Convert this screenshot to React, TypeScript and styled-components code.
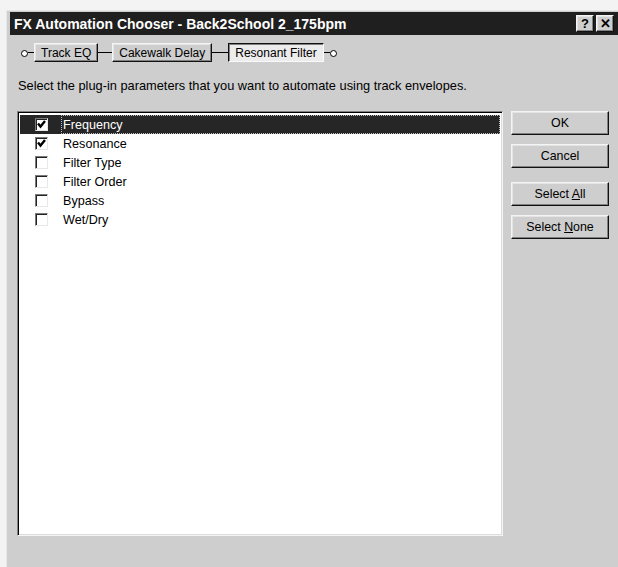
import styled, { createGlobalStyle } from "styled-components";

const GlobalStyle = createGlobalStyle`
  html, body {
    margin: 0;
    padding: 0;
    background: #f3f3f3;
    overflow: hidden;
  }
  body {
    font-family: "Liberation Sans", Arial, sans-serif;
    font-size: 12px;
    color: #000;
  }
`;

const Window = styled.div`
  margin: 10px 0 0 6px;
  width: 612px;
  height: 570px;
  box-sizing: border-box;
  background: #cecece;
  border-top: 1px solid #e8e8e8;
  border-left: 1px solid #e8e8e8;
  padding: 1px 0 0 3px;
`;

const TitleBar = styled.div`
  height: 23px;
  background: #1f1f1f;
  color: #fff;
  display: flex;
  align-items: center;
  justify-content: space-between;
  padding: 0 4px;
  font-weight: bold;
  font-size: 14px;
`;

const TitleButtons = styled.div`
  display: flex;
  gap: 2px;
`;

const raised = `
  background: #cecece;
  border: 1px solid;
  border-color: #f4f4f4 #111 #111 #f4f4f4;
  box-shadow: inset -1px -1px #808080, inset 1px 1px #e4e4e4;
`;

const CaptionButton = styled.div`
  ${raised}
  width: 18px;
  height: 17px;
  box-sizing: border-box;
  display: flex;
  align-items: center;
  justify-content: center;
  color: #000;
  font-weight: bold;
  font-size: 13px;
`;

const Content = styled.div`
  padding: 8px 8px 0 7px;
`;

const Chain = styled.div`
  display: flex;
  align-items: center;
  height: 19px;
  padding-left: 4px;
`;

const Node = styled.span`
  width: 5px;
  height: 5px;
  border: 1px solid #000;
  border-radius: 50%;
  background: #fff;
  margin-top: 1px;
`;

const Wire = styled.span<{ $len: number }>`
  width: ${(p) => p.$len}px;
  height: 1px;
  background: #000;
`;

const ChainButton = styled.div<{ $active?: boolean }>`
  height: 19px;
  box-sizing: border-box;
  padding: 0 6px;
  display: flex;
  align-items: center;
  white-space: nowrap;
  ${(p) =>
    p.$active
      ? `
    background: #ececec;
    border: 1px solid;
    border-color: #111 #fafafa #fafafa #111;
    box-shadow: inset 1px 1px #808080;
  `
      : raised}
`;

const Hint = styled.p`
  margin: 17px 0 0 1px;
  line-height: 14px;
  font-size: 12.8px;
`;

const Main = styled.div`
  display: flex;
  gap: 8px;
  margin-top: 18px;
`;

const ListBox = styled.div`
  width: 486px;
  height: 425px;
  box-sizing: border-box;
  background: #fff;
  border: 1px solid;
  border-color: #808080 #f4f4f4 #f4f4f4 #808080;
  box-shadow: inset 1px 1px #000, inset -1px -1px #dcdcdc;
  padding: 3px 2px 2px;
  font-size: 12.6px;
`;

const Row = styled.div<{ $selected?: boolean }>`
  height: 19px;
  display: flex;
  align-items: center;
  background: ${(p) => (p.$selected ? "#262626" : "transparent")};
  color: ${(p) => (p.$selected ? "#fff" : "#000")};
`;

const Check = styled.span`
  width: 13px;
  height: 13px;
  box-sizing: border-box;
  margin-left: 15px;
  background: #fff;
  border: 1px solid;
  border-color: #7a7a7a #e8e8e8 #e8e8e8 #7a7a7a;
  box-shadow: inset 1px 1px #222;
  display: flex;
  align-items: center;
  justify-content: center;
  flex-shrink: 0;
`;

const Label = styled.span<{ $focused?: boolean }>`
  flex: 1;
  height: 100%;
  box-sizing: border-box;
  margin-left: 13px;
  padding-left: 1px;
  display: flex;
  align-items: center;
  border: 1px dotted ${(p) => (p.$focused ? "#bdbdbd" : "transparent")};
`;

const Side = styled.div`
  display: flex;
  flex-direction: column;
  width: 98px;
  font-size: 12.4px;
`;

const Button = styled.div<{ $gap: number }>`
  ${raised}
  height: 24px;
  box-sizing: border-box;
  margin-top: ${(p) => p.$gap}px;
  display: flex;
  align-items: center;
  justify-content: center;
`;

const params = [
  { name: "Frequency", on: true },
  { name: "Resonance", on: true },
  { name: "Filter Type", on: false },
  { name: "Filter Order", on: false },
  { name: "Bypass", on: false },
  { name: "Wet/Dry", on: false },
];

const Tick = () => (
  <svg width="9" height="9" viewBox="0 0 9 9">
    <path d="M1 3.5 L3.5 6.5 L8 1" fill="none" stroke="#000" strokeWidth="2.4" />
  </svg>
);

export default function App() {
  return (
    <>
      <GlobalStyle />
      <Window>
        <TitleBar>
          <span>FX Automation Chooser - Back2School 2_175bpm</span>
          <TitleButtons>
            <CaptionButton>?</CaptionButton>
            <CaptionButton>✕</CaptionButton>
          </TitleButtons>
        </TitleBar>
        <Content>
          <Chain>
            <Node />
            <Wire $len={6} />
            <ChainButton>Track EQ</ChainButton>
            <Wire $len={14} />
            <ChainButton>Cakewalk Delay</ChainButton>
            <Wire $len={16} />
            <ChainButton $active>Resonant Filter</ChainButton>
            <Wire $len={6} />
            <Node />
          </Chain>
          <Hint>Select the plug-in parameters that you want to automate using track envelopes.</Hint>
          <Main>
            <ListBox>
              {params.map((p, i) => (
                <Row key={p.name} $selected={i === 0}>
                  <Check>{p.on && <Tick />}</Check>
                  <Label $focused={i === 0}>{p.name}</Label>
                </Row>
              ))}
            </ListBox>
            <Side>
              <Button $gap={0}>OK</Button>
              <Button $gap={9}>Cancel</Button>
              <Button $gap={14}>
                <span>
                  Select <u>A</u>ll
                </span>
              </Button>
              <Button $gap={9}>
                <span>
                  Select <u>N</u>one
                </span>
              </Button>
            </Side>
          </Main>
        </Content>
      </Window>
    </>
  );
}
